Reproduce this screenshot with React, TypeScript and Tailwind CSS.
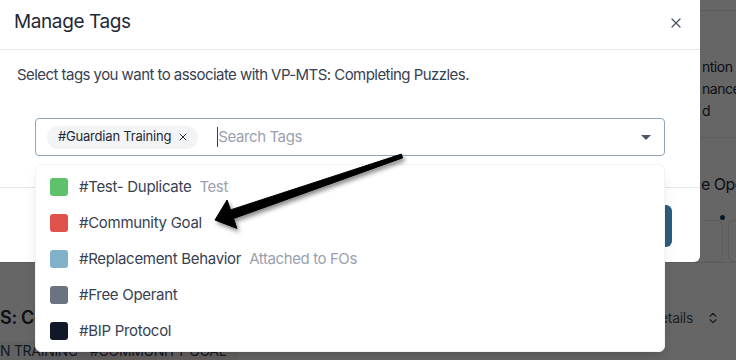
import React from 'react';
import { X, ChevronsUpDown } from 'lucide-react';

type TagOption = { id: string; name: string; note?: string; color: string };

const options: TagOption[] = [
  { id: 't1', name: '#Test- Duplicate', note: 'Test', color: 'bg-[#5dc26a]' },
  { id: 't2', name: '#Community Goal', color: 'bg-[#e0524c]' },
  { id: 't3', name: '#Replacement Behavior', note: 'Attached to FOs', color: 'bg-[#7fb1c9]' },
  { id: 't4', name: '#Free Operant', color: 'bg-[#6b7280]' },
  { id: 't5', name: '#BIP Protocol', color: 'bg-[#111827]' },
];

const font = "font-['Inter','Noto_Sans',sans-serif]";

// page that sits behind the dimmed backdrop
const BackgroundPage: React.FC = () => (
  <div className="absolute inset-0 flex flex-col bg-white text-[#1f2937]">
    <div className="flex h-[283px] border-b border-gray-200">
      <div className="flex-1" />
      <div className="flex w-[36px] flex-col">
        <div className="h-[11px] border-b border-gray-200" />
        <div className="flex flex-col pl-[2px] pt-[45px] pb-[15px] text-[14px] leading-[22px] tracking-[-0.5px] whitespace-nowrap border-b border-gray-200">
          <span>ntion</span>
          <span>nance</span>
          <span>d</span>
        </div>
        <div className="pl-[1px] pt-[34px] text-[16px] leading-[24px] tracking-[-0.5px] whitespace-nowrap">e Ope</div>
        <div className="relative mt-[24px] flex gap-[5px] pl-[5px]">
          <span className="absolute left-[20px] top-[-5px] h-[5px] w-[5px] rounded-full bg-[#1e3a5f]" />
          <div className="h-[42px] w-[18px] rounded-r-md border border-l-0 border-gray-200" />
          <div className="h-[42px] flex-1 rounded-l-md border border-r-0 border-gray-200" />
        </div>
      </div>
    </div>
    <div className="flex items-center justify-between pt-[41px]">
      <span className="text-[18px] font-semibold tracking-[-0.3px] whitespace-nowrap">S: Completing Puzzles</span>
      <div className="flex items-center gap-[13px] pr-[16px] text-[14px] tracking-[-0.3px] text-gray-600">
        <span>Details</span>
        <ChevronsUpDown className="h-[14px] w-[14px] text-gray-700" strokeWidth={2} />
      </div>
    </div>
    <div className="mt-[10px] flex gap-[5px] text-[14px] leading-[20px] tracking-[-0.3px] text-gray-700">
      <span className="w-[72px] bg-gray-100 whitespace-nowrap">N TRAINING</span>
      <span className="bg-red-50 px-[13px] whitespace-nowrap">#COMMUNITY GOAL</span>
    </div>
  </div>
);

const Arrow: React.FC = () => (
  <svg
    className="pointer-events-none absolute left-0 top-0"
    width={736}
    height={360}
    viewBox="0 0 736 360"
    style={{ filter: 'drop-shadow(2px 3px 2px rgba(0,0,0,0.45))' }}
  >
    <polygon
      points="401.4,154.1 230.5,209.9 227.1,200 215,220 236.9,228.4 233.5,218.5 402.6,157.9"
      fill="#000"
      stroke="#000"
      strokeLinejoin="round"
      strokeWidth={1}
    />
  </svg>
);

export default function App() {
  return (
    <div className={`relative h-[360px] w-[736px] overflow-hidden ${font}`}>
      <BackgroundPage />
      <div className="absolute inset-0 bg-black/60" />

      {/* modal */}
      <div className="absolute left-0 top-0 flex h-[262px] w-[700px] flex-col rounded-br-md bg-white">
        <div className="flex h-[50px] items-center justify-between border-b border-gray-200 pb-[4px] pl-[14px] pr-[16px]">
          <h2 className="text-[19px] font-normal tracking-[-0.4px] text-[#1f2937]">Manage Tags</h2>
          <X className="h-[16px] w-[16px] text-gray-600" strokeWidth={1.8} />
        </div>
        <div className="flex flex-col px-[35px] pb-[31px] pt-[15px]">
          <p className="-ml-[18px] text-[15px] leading-[20px] tracking-[-0.55px] text-[#374151]">
            Select tags you want to associate with VP-MTS: Completing Puzzles.
          </p>
          <div className="mt-[33px] flex h-[38px] items-center rounded-[4px] border border-[#8ea6b8] pl-[11px] pr-[13px]">
            <span className="flex h-[23px] items-center gap-[6px] rounded-full bg-gray-100 pl-[11px] pr-[9px] text-[13px] tracking-[-0.2px] text-[#1f2937]">
              #Guardian Training
              <X className="h-[12px] w-[12px]" strokeWidth={2} />
            </span>
            <span className="ml-[19px] h-[20px] w-px bg-gray-700" />
            <span className="text-[15px] tracking-[-0.4px] text-gray-400">Search Tags</span>
            <span className="ml-auto h-0 w-0 border-x-[5px] border-t-[5px] border-x-transparent border-t-gray-600" />
          </div>
        </div>
        <div className="flex justify-end border-t border-gray-200 pr-[28px] pt-[17px]">
          <button className="h-[42px] w-[90px] rounded-md bg-[#2f5d7d] text-white" />
        </div>
      </div>

      {/* dropdown */}
      <div className="absolute left-[35px] top-[164px] w-[630px] rounded-md border border-gray-100 bg-white pb-[2px] pt-[4px] shadow-lg">
        {options.map((o) => (
          <div key={o.id} className="flex h-[36px] items-center pl-[14px]">
            <span className={`mr-[11px] h-[18px] w-[18px] rounded-[3px] ${o.color}`} />
            <span className="text-[15px] tracking-[-0.3px] text-[#374151]">{o.name}</span>
            {o.note && <span className="ml-[8px] text-[15px] tracking-[-0.4px] text-gray-400">{o.note}</span>}
          </div>
        ))}
      </div>

      <Arrow />
    </div>
  );
}
